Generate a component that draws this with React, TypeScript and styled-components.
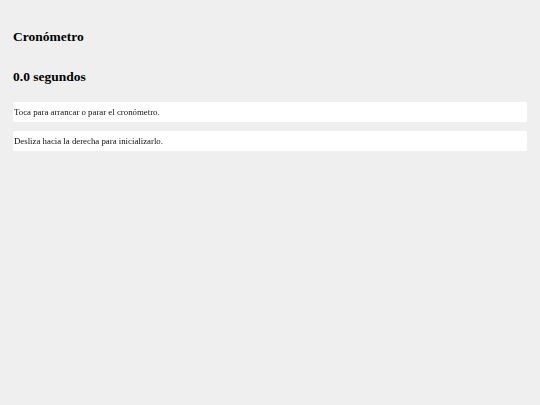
import React from "react";
import styled, { createGlobalStyle } from "styled-components";

const Global = createGlobalStyle`
  html, body { margin: 0; padding: 0; background: #efefef; }
  body { font-family: "Liberation Serif", "Times New Roman", serif; color: #000; }
`;

const Page = styled.div`
  display: flex;
  flex-direction: column;
  padding: 29px 13px 0;
  min-height: 405px;
  box-sizing: border-box;
`;

const Heading = styled.h5<{ $gap?: number }>`
  margin: ${(p) => p.$gap ?? 0}px 0 0;
  font-size: 13.5px;
  line-height: 16px;
  font-weight: bold;
`;

const Hints = styled.div`
  display: flex;
  flex-direction: column;
  gap: 9px;
  margin-top: 17px;
  filter: grayscale(1);
`;

const Hint = styled.div`
  background: #fff;
  border-radius: 2px;
  height: 20px;
  display: flex;
  align-items: center;
  padding-left: 1px;
  font-size: 8.8px;
  color: #111;
`;

export default function App() {
  return (
    <>
      <Global />
      <Page>
        <Heading>Cronómetro</Heading>
        <Heading $gap={24}>0.0 segundos</Heading>
        <Hints>
          <Hint>Toca para arrancar o parar el cronómetro.</Hint>
          <Hint>Desliza hacia la derecha para inicializarlo.</Hint>
        </Hints>
      </Page>
    </>
  );
}
